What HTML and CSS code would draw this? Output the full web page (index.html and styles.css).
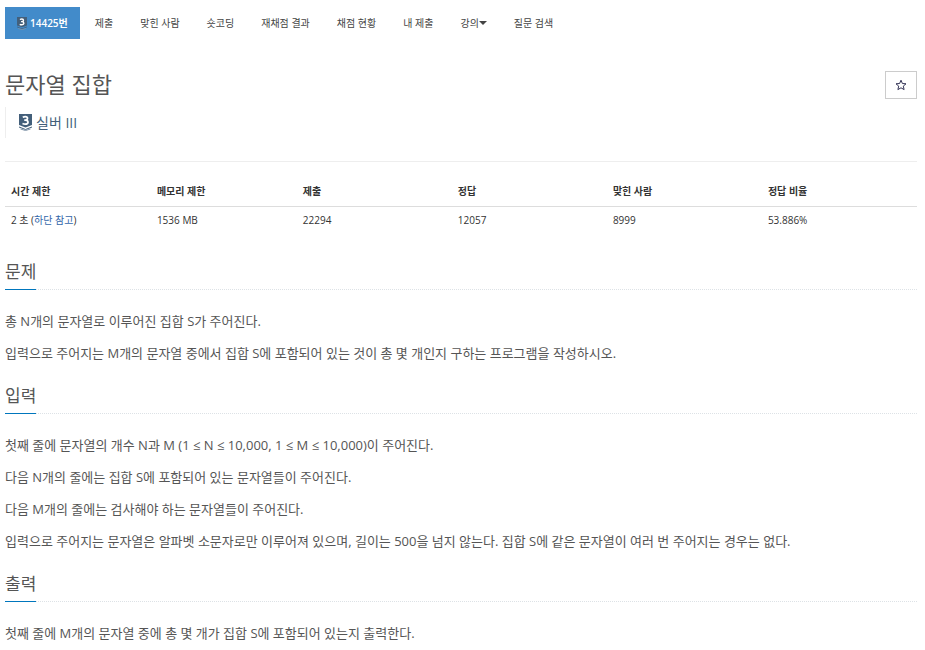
FILE: index.html
```html
<!DOCTYPE html>
<html lang="ko">
<head>
    <meta charset="UTF-8">
    <meta name="viewport" content="width=device-width, initial-scale=1">
    <title>14425번: 문자열 집합</title>
    <link rel="stylesheet" href="styles.css">
</head>
<body>
    <svg class="symbols" aria-hidden="true">
        <symbol id="tier-silver3" viewBox="0 0 26 34">
            <path fill="#435f7a" d="M0 0h26v22l-13 5L0 22z"/>
            <path fill="none" stroke="#435f7a" stroke-width="2" d="M0 26l13 5 13-5"/>
            <path fill="none" stroke="#8195a8" stroke-width="2" d="M3 30l10 3 10-3"/>
            <path fill="none" stroke="#fff" stroke-width="3.500" d="M7.500 6.500q2.500-1.200 5-1.200 4.500 0 4.500 3.400t-4.500 3.600h-2m2 0q5.500.2 5.500 4t-5.500 4q-3 0-5.500-1.200"/>
        </symbol>
    </svg>

    <nav>
        <ul class="problem-menu">
            <li><a class="active" href="#"><svg class="tier-small"><use href="#tier-silver3"/></svg>14425번</a></li>
            <li><a href="#">제출</a></li>
            <li><a href="#">맞힌 사람</a></li>
            <li><a href="#">숏코딩</a></li>
            <li><a href="#">재채점 결과</a></li>
            <li><a href="#">채점 현황</a></li>
            <li><a href="#">내 제출</a></li>
            <li><a href="#">강의<span class="caret"></span></a></li>
            <li><a href="#">질문 검색</a></li>
        </ul>
    </nav>

    <main>
        <div class="page-header">
            <h1>문자열 집합</h1>
            <button class="favorite" type="button" aria-label="즐겨찾기">
                <svg viewBox="0 0 12 12"><path d="M6 1.200l1.400 3.300 3.600.3-2.700 2.300.8 3.500L6 8.800l-3.100 1.800.8-3.500L1 4.800l3.600-.3z"/></svg>
            </button>
        </div>
        <blockquote class="tier">
            <svg class="tier-icon"><use href="#tier-silver3"/></svg>
            <span>실버 III</span>
        </blockquote>

        <hr>

        <table class="problem-info">
            <thead>
                <tr>
                    <th class="limit">시간 제한</th>
                    <th class="limit">메모리 제한</th>
                    <th>제출</th>
                    <th>정답</th>
                    <th>맞힌 사람</th>
                    <th>정답 비율</th>
                </tr>
            </thead>
            <tbody>
                <tr>
                    <td>2 초 (<a href="#">하단 참고</a>)</td>
                    <td>1536 MB</td>
                    <td>22294</td>
                    <td>12057</td>
                    <td>8999</td>
                    <td>53.886%</td>
                </tr>
            </tbody>
        </table>

        <section>
            <div class="headline"><h2>문제</h2></div>
            <p>총 N개의 문자열로 이루어진 집합 S가 주어진다.</p>
            <p>입력으로 주어지는 M개의 문자열 중에서 집합 S에 포함되어 있는 것이 총 몇 개인지 구하는 프로그램을 작성하시오.</p>
        </section>

        <section>
            <div class="headline"><h2>입력</h2></div>
            <p>첫째 줄에 문자열의 개수 N과 M (1 ≤ N ≤ 10,000, 1 ≤ M ≤ 10,000)이 주어진다.</p>
            <p>다음 N개의 줄에는 집합 S에 포함되어 있는 문자열들이 주어진다.</p>
            <p>다음 M개의 줄에는 검사해야 하는 문자열들이 주어진다.</p>
            <p>입력으로 주어지는 문자열은 알파벳 소문자로만 이루어져 있으며, 길이는 500을 넘지 않는다. 집합 S에 같은 문자열이 여러 번 주어지는 경우는 없다.</p>
        </section>

        <section>
            <div class="headline"><h2>출력</h2></div>
            <p>첫째 줄에 M개의 문자열 중에 총 몇 개가 집합 S에 포함되어 있는지 출력한다.</p>
        </section>
    </main>
</body>
</html>
```
FILE: styles.css
```css
* {
    box-sizing: border-box;
}
body {
    font-family: "Open Sans", "Noto Sans CJK KR", sans-serif;
    font-size: 13px;
    line-height: 22px;
    color: #555;
    background: #fff;
    margin: 0;
    padding: 7px 8px 0 5px;
}
.symbols {
    display: none;
}

/* menu */
.problem-menu {
    display: flex;
    flex-wrap: wrap;
    gap: 3px;
    list-style: none;
    margin: 0;
    padding: 0;
}
.problem-menu a {
    display: flex;
    align-items: center;
    height: 32px;
    padding: 0 12px;
    font-size: 10px;
    color: #444;
    text-decoration: none;
}
.problem-menu a.active {
    background: #428bca;
    color: #fff;
    font-weight: 600;
}
.tier-small {
    width: 10px;
    height: 13px;
    margin-right: 3px;
}
.caret {
    border-top: 4px solid #444;
    border-left: 4px solid transparent;
    border-right: 4px solid transparent;
}

/* title */
.page-header {
    display: flex;
    justify-content: space-between;
    align-items: center;
    margin-top: 30px;
}
h1 {
    font-size: 22px;
    line-height: 30px;
    font-weight: 400;
    margin: 0;
    padding-bottom: 2px;
}
.favorite {
    display: flex;
    align-items: center;
    justify-content: center;
    width: 32px;
    height: 28px;
    padding: 0;
    background: #fff;
    border: 1px solid #ccc;
}
.favorite svg {
    width: 12px;
    height: 12px;
    fill: none;
    stroke: #335;
}
.tier {
    display: flex;
    align-items: center;
    gap: 4px;
    height: 31px;
    margin: 6px 0 0;
    padding-left: 13px;
    border-left: 1px solid #eee;
    font-size: 14px;
    color: #435f7a;
}
.tier-icon {
    width: 13px;
    height: 17px;
}
hr {
    border: 0;
    border-top: 1px solid #eee;
    margin: 23px 0 14px;
}

/* limits and statistics */
.problem-info {
    width: 100%;
    table-layout: fixed;
    border-collapse: collapse;
    font-size: 10px;
    line-height: 16px;
    color: #333;
}
.problem-info th,
.problem-info td {
    width: 17%;
    padding: 5px 6px;
    text-align: left;
}
.problem-info th {
    padding: 7px 6px;
    border-bottom: 1px solid #ddd;
    font-weight: 700;
}
.problem-info .limit {
    width: 16%;
}
.problem-info a {
    color: #36a;
    text-decoration: none;
}

/* problem text */
section {
    margin-top: 18px;
}
.problem-info + section {
    margin-top: 25px;
}
.headline {
    border-bottom: 1px dotted #dde2e6;
    margin-bottom: 20px;
}
h2 {
    display: inline-block;
    vertical-align: top;
    font-size: 17px;
    line-height: 28px;
    font-weight: 400;
    margin: 0 0 -1px;
    padding-bottom: 3px;
    border-bottom: 1px solid #0076bd;
}
p {
    margin: 0 0 10px;
}
```
